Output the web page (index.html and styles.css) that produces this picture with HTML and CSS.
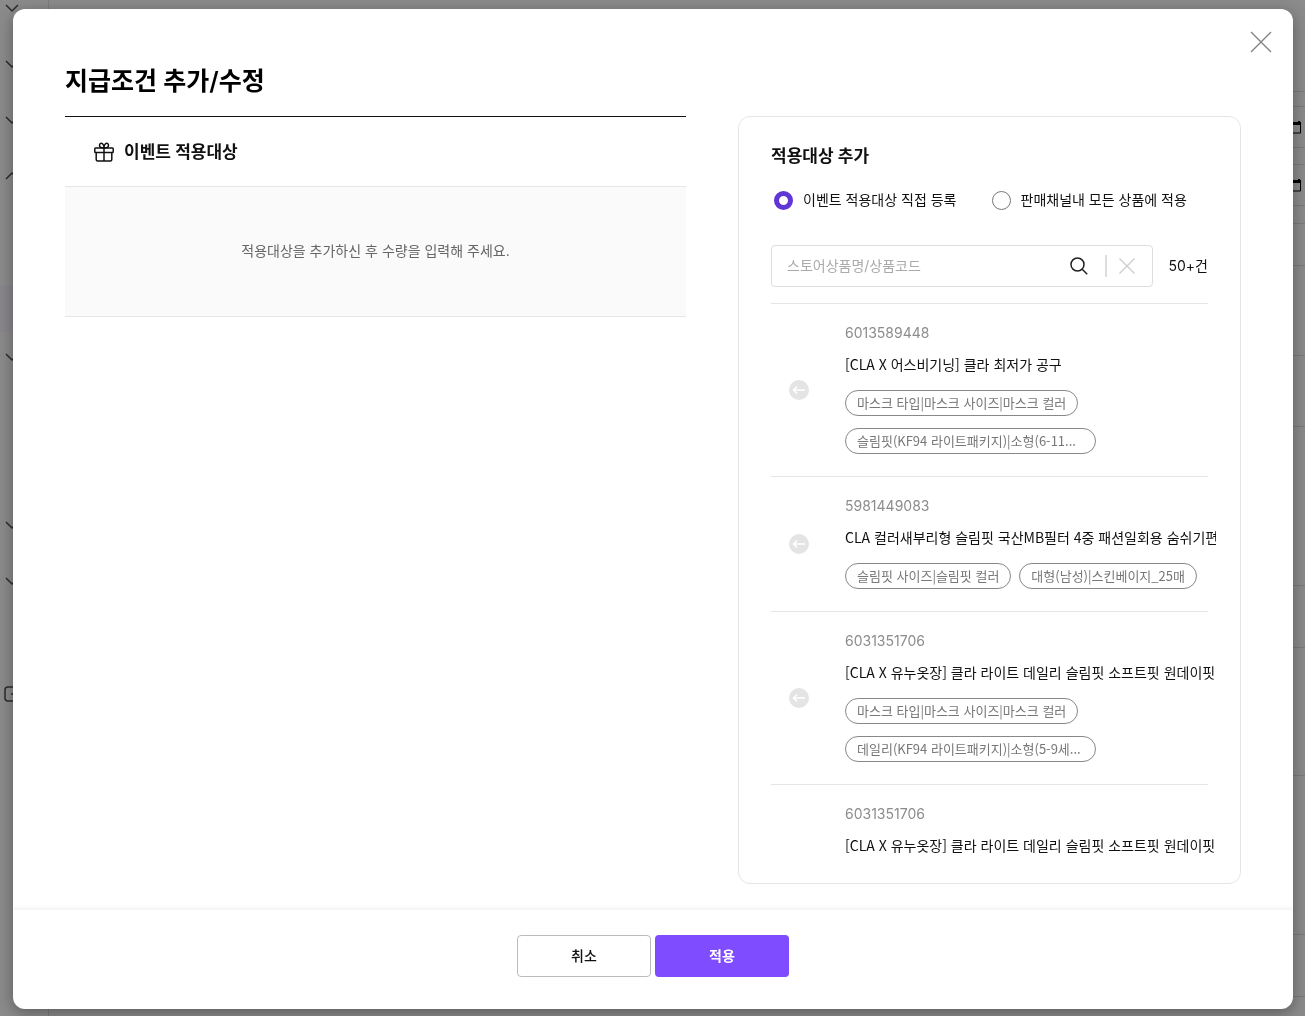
FILE: index.html
```html
<!DOCTYPE html>
<html lang="ko">
<head>
  <meta charset="UTF-8">
  <meta name="viewport" content="width=device-width, initial-scale=1.0">
  <title>지급조건 추가/수정</title>
  <link rel="stylesheet" href="styles.css">
</head>
<body>

<!-- Dimmed page behind the modal -->
<div class="backdrop" aria-hidden="true">
  <svg class="backdrop-left" width="60" height="1016" viewBox="0 0 60 1016" fill="none">
    <path d="M48.500 0V1016" stroke="#7c7c7c"/>
    <path d="M0 286H48V332H0Z" fill="#89878c"/>
    <g stroke="#2c2c2c" stroke-width="1.500">
      <path d="M6 5l6 6 6-6M6 61l6 6 6-6M6 117l6 6 6-6M6 179l6-6 6 6"/>
      <path d="M6 354l6 6 6-6M6 522l6 6 6-6M6 578l6 6 6-6"/>
      <path d="M14 687H8a3 3 0 0 0-3 3v8a3 3 0 0 0 3 3h6M11 694h8"/>
    </g>
  </svg>
  <svg class="backdrop-right" width="40" height="1016" viewBox="0 0 40 1016" fill="none">
    <path d="M0 91.500H40M0 106.500H40M0 147.500H40M0 164.500H40M0 205.500H40M0 223.500H40M0 265.500H40M0 355.500H40M0 426.500H40M0 585.500H40M0 647.500H40M0 775.500H40M0 934.500H40M0 996.500H40" stroke="#7a7a7a"/>
    <path d="M25 123.500H35.500V133H25M25 181.500H35.500V191H25" stroke="#000"/>
    <path d="M25 122H36V125H25ZM33 121H35V122H33ZM25 180H36V183H25ZM33 179H35V180H33Z" fill="#000"/>
  </svg>
</div>

<!-- Modal -->
<div class="modal" role="dialog" aria-modal="true" aria-labelledby="modalTitle">
  <button type="button" class="close-button" aria-label="닫기">
    <svg width="22" height="22" viewBox="0 0 22 22" fill="none" stroke="#808080" stroke-width="1.300"><path d="M1 1l20 20M21 1L1 21"/></svg>
  </button>

  <div class="modal-body">
    <h1 class="modal-title" id="modalTitle">지급조건 추가/수정</h1>

    <div class="columns">
      <section class="target">
        <h2 class="target-header">
          <svg width="20" height="20" viewBox="0 0 20 20" fill="none" stroke="#111" stroke-width="1.500">
            <rect x="0.800" y="6" width="18.400" height="4.500" rx="0.800"/>
            <path d="M2.200 10.500v7a1.500 1.500 0 0 0 1.500 1.500h12.600a1.500 1.500 0 0 0 1.500-1.500v-7M10 6V19"/>
            <path d="M10 6C7.500 6 5.500 5.200 5.500 3.200S7.300 1 8.400 1.700C9.600 2.500 10 4.500 10 6C10 4.500 10.400 2.500 11.600 1.700C12.700 1 14.500 1.200 14.500 3.200S12.500 6 10 6Z"/>
          </svg>
          이벤트 적용대상
        </h2>
        <p class="target-empty">적용대상을 추가하신 후 수량을 입력해 주세요.</p>
      </section>

      <section class="panel">
        <h2 class="panel-title">적용대상 추가</h2>

        <div class="radio-group">
          <label class="radio"><input type="radio" name="targetType" checked>이벤트 적용대상 직접 등록</label>
          <label class="radio"><input type="radio" name="targetType">판매채널내 모든 상품에 적용</label>
        </div>

        <form class="search">
          <div class="search-box">
            <input type="text" class="search-input" aria-label="상품 검색" placeholder="스토어상품명/상품코드">
            <button type="submit" class="icon-button" aria-label="검색">
              <svg width="18" height="18" viewBox="0 0 18 18" fill="none" stroke="#222" stroke-width="1.500"><circle cx="7.500" cy="7.500" r="6.500"/><path d="M12.200 12.200l5 5"/></svg>
            </button>
            <span class="search-divider"></span>
            <button type="reset" class="icon-button" aria-label="지우기">
              <svg width="16" height="16" viewBox="0 0 16 16" fill="none" stroke="#ccc" stroke-width="1.300"><path d="M0.500 0.500l15 15M15.500 0.500l-15 15"/></svg>
            </button>
          </div>
          <span class="search-count">50+건</span>
        </form>

        <ul class="product-list">
          <li class="product">
            <button type="button" class="add-button" aria-label="추가">
              <svg width="20" height="20" viewBox="0 0 20 20" fill="none"><circle cx="10" cy="10" r="10" fill="#e4e4e4"/><path d="M16 10H5M8 6.500L4.500 10L8 13.500" stroke="#fff" stroke-width="1.500"/></svg>
            </button>
            <div class="product-info">
              <p class="product-id">6013589448</p>
              <p class="product-name">[CLA X 어스비기닝] 클라 최저가 공구</p>
              <div class="chips">
                <span class="chip">마스크 타입|마스크 사이즈|마스크 컬러</span>
                <span class="chip chip-long">슬림핏(KF94 라이트패키지)|소형(6-11...</span>
              </div>
            </div>
          </li>
          <li class="product">
            <button type="button" class="add-button" aria-label="추가">
              <svg width="20" height="20" viewBox="0 0 20 20" fill="none"><circle cx="10" cy="10" r="10" fill="#e4e4e4"/><path d="M16 10H5M8 6.500L4.500 10L8 13.500" stroke="#fff" stroke-width="1.500"/></svg>
            </button>
            <div class="product-info">
              <p class="product-id">5981449083</p>
              <p class="product-name">CLA 컬러새부리형 슬림핏 국산MB필터 4중 패션일회용 숨쉬기편</p>
              <div class="chips">
                <span class="chip">슬림핏 사이즈|슬림핏 컬러</span>
                <span class="chip">대형(남성)|스킨베이지_25매</span>
              </div>
            </div>
          </li>
          <li class="product">
            <button type="button" class="add-button" aria-label="추가">
              <svg width="20" height="20" viewBox="0 0 20 20" fill="none"><circle cx="10" cy="10" r="10" fill="#e4e4e4"/><path d="M16 10H5M8 6.500L4.500 10L8 13.500" stroke="#fff" stroke-width="1.500"/></svg>
            </button>
            <div class="product-info">
              <p class="product-id">6031351706</p>
              <p class="product-name">[CLA X 유누옷장] 클라 라이트 데일리 슬림핏 소프트핏 원데이핏</p>
              <div class="chips">
                <span class="chip">마스크 타입|마스크 사이즈|마스크 컬러</span>
                <span class="chip chip-long">데일리(KF94 라이트패키지)|소형(5-9세...</span>
              </div>
            </div>
          </li>
          <li class="product">
            <div class="product-info">
              <p class="product-id">6031351706</p>
              <p class="product-name">[CLA X 유누옷장] 클라 라이트 데일리 슬림핏 소프트핏 원데이핏</p>
            </div>
          </li>
        </ul>
      </section>
    </div>
  </div>

  <div class="modal-footer">
    <button type="button" class="btn btn-secondary">취소</button>
    <button type="button" class="btn btn-primary">적용</button>
  </div>
</div>

</body>
</html>
```
FILE: styles.css
```css
* {
  box-sizing: border-box;
}

body {
  margin: 0;
  height: 100vh;
  padding: 9px 12px 7px 13px;
  overflow: hidden;
  background-color: #8b8b8b;
  color: #111;
  font-family: Inter, "Noto Sans CJK KR", sans-serif;
  font-size: 14px;
  line-height: 24px;
}

h1, h2, p, ul {
  margin: 0;
  padding: 0;
}

button, input {
  font: inherit;
  color: inherit;
}

button {
  padding: 0;
  border: none;
  background: none;
  cursor: pointer;
}

svg {
  display: block;
}

/* Page behind the modal */
.backdrop {
  position: fixed;
  inset: 0;
  display: flex;
  justify-content: space-between;
}

/* Modal */
.modal {
  position: relative;
  display: flex;
  flex-direction: column;
  height: 100%;
  border-radius: 12px;
  background-color: #fff;
  box-shadow: 0 4px 16px rgba(0, 0, 0, 0.35);
  overflow: hidden;
}

.close-button {
  position: absolute;
  top: 22px;
  right: 21px;
}

.modal-body {
  flex: 1;
  min-height: 0;
  display: flex;
  flex-direction: column;
  padding: 52px 52px 26px;
}

.modal-title {
  margin-bottom: 15px;
  color: #000;
  font-size: 25px;
  font-weight: 600;
  line-height: 40px;
}

.columns {
  flex: 1;
  min-height: 0;
  display: flex;
  gap: 52px;
}

/* Left column */
.target {
  flex: 1;
  min-width: 0;
  border-top: 1px solid #111;
}

.target-header {
  display: flex;
  align-items: center;
  gap: 10px;
  height: 69px;
  padding-left: 29px;
  font-size: 17px;
  font-weight: 600;
}

.target-empty {
  padding: 52px 16px 53px;
  border-top: 1px solid #e6e6e6;
  border-bottom: 1px solid #e6e6e6;
  background-color: #fafafa;
  color: #666;
  text-align: center;
}

/* Right panel */
.panel {
  display: flex;
  flex-direction: column;
  width: 503px;
  padding: 27px 32px 24px;
  border: 1px solid #e5e5e5;
  border-radius: 12px;
}

.panel-title {
  font-size: 17px;
  font-weight: 600;
}

.radio-group {
  display: flex;
  gap: 32px;
  margin-top: 20px;
}

.radio {
  display: flex;
  align-items: center;
  gap: 10px;
}

.radio input {
  appearance: none;
  width: 19px;
  height: 19px;
  margin: 0 0 0 3px;
  border: 1px solid #777;
  border-radius: 50%;
  background-color: #fff;
}

.radio input:checked {
  border: 5px solid #5f35d5;
}

.search {
  display: flex;
  align-items: center;
  gap: 15px;
  margin: 33px 0 16px;
}

.search-box {
  flex: 1;
  min-width: 0;
  display: flex;
  align-items: center;
  height: 42px;
  padding: 0 17px 0 15px;
  border: 1px solid #ddd;
  border-radius: 4px;
}

.search-input {
  flex: 1;
  min-width: 0;
  padding: 0;
  border: none;
  outline: none;
  background: none;
}

.search-input::placeholder {
  color: #aaa;
}

.search-divider {
  width: 2px;
  height: 22px;
  margin: 0 12px 0 17px;
  background-color: #ddd;
}

.search-count {
  min-width: 40px;
  text-align: right;
}

/* Product list, names may run slightly past the row's line */
.product-list {
  flex: 1;
  min-height: 0;
  margin-right: -8px;
  padding-right: 8px;
  overflow-y: auto;
  scrollbar-width: none;
  list-style: none;
}

.product {
  display: grid;
  grid-template-columns: 56px minmax(0, 1fr);
  column-gap: 18px;
  align-items: center;
  border-top: 1px solid #e5e5e5;
}

.add-button {
  justify-self: center;
}

.product-info {
  grid-column: 2;
  padding: 17px 0 22px;
}

.product-id {
  color: #8c8c8c;
}

.product-name {
  margin: 7px -8px 0 0;
  overflow: hidden;
  font-family: "Noto Sans CJK KR", sans-serif;
  white-space: nowrap;
}

.chips {
  display: flex;
  flex-wrap: wrap;
  gap: 12px 8px;
  margin-top: 14px;
}

.chip {
  height: 26px;
  padding: 0 11px;
  border: 1px solid #888;
  border-radius: 13px;
  color: #777;
  font-family: "Noto Sans CJK KR", sans-serif;
  font-size: 13px;
  white-space: nowrap;
}

.chip-long {
  width: 251px;
  overflow: hidden;
}

/* Footer */
.modal-footer {
  display: flex;
  justify-content: center;
  gap: 4px;
  padding: 25px 0 32px;
  box-shadow: 0 -2px 4px rgba(0, 0, 0, 0.06);
}

.btn {
  width: 134px;
  height: 42px;
  border-radius: 4px;
  font-weight: 500;
}

.btn-secondary {
  border: 1px solid #bbb;
  background-color: #fff;
}

.btn-primary {
  background-color: #7f4cff;
  color: #fff;
  font-weight: 600;
}
```
